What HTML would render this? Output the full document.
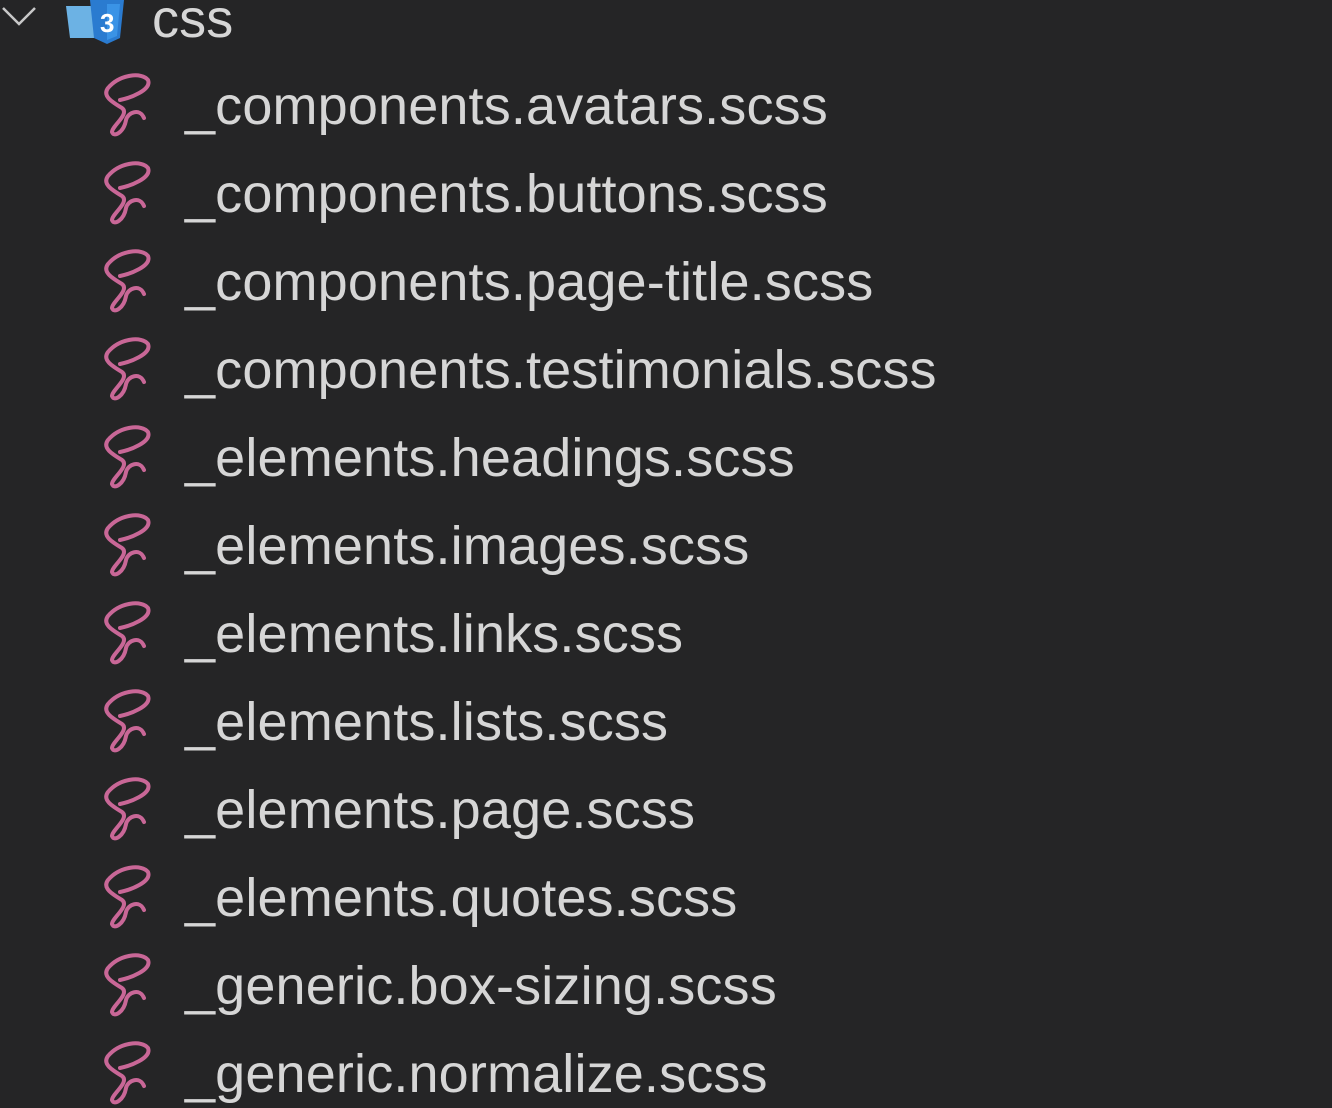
<!DOCTYPE html>
<html><head><meta charset="utf-8"><style>
html,body{margin:0;padding:0;background:#252526;width:1332px;height:1084px;overflow:hidden;}
.t{position:absolute;left:185px;font-family:"Liberation Sans",Arial,sans-serif;font-size:54px;letter-spacing:0.15px;color:#d6d6d6;line-height:1;white-space:nowrap;}
svg.s{position:absolute;left:90px;width:80px;height:70px;}
</style></head><body>
<svg style="position:absolute;left:0;top:0" width="40" height="40"><path d="M3 8 L19 24 L35 8" stroke="#c8c8c8" stroke-width="2.5" fill="none"/></svg>
<svg style="position:absolute;left:62px;top:0" width="66" height="46">
<path d="M4 6 L36 6 L34 38 L8 38 Z" fill="#6cb2e4"/>
<path d="M28 0 L62 0 L58 38 L45 44 L32 38 Z" fill="#2a7bd0"/>
<path d="M45 4 L58 4 L55 36 L45 40 Z" fill="#3a93e6"/>
<text x="38" y="32" font-family="Liberation Sans,sans-serif" font-size="26" font-weight="bold" fill="#fff">3</text>
</svg>
<div class="t" style="left:152px;top:-8px">css</div>
<div id="c"></div>
<script>
var names=["_components.avatars.scss","_components.buttons.scss","_components.page-title.scss","_components.testimonials.scss","_elements.headings.scss","_elements.images.scss","_elements.links.scss","_elements.lists.scss","_elements.page.scss","_elements.quotes.scss","_generic.box-sizing.scss","_generic.normalize.scss"];
var h="";
names.forEach(function(n,i){var y=105+88*i;
h+='<svg class="s" style="top:'+(y-35)+'px" viewBox="0 0 80 70"><path d="M30 30 C40 28,62 20,58 10 C52 2,30 4,18 18 C12 26,22 32,32 38 C40 44,22 56,22 62 C24 68,34 62,36 50 C38 42,50 38,54 48" stroke="#c96797" stroke-width="4" fill="none" stroke-linecap="round"/></svg>';
h+='<div class="t" style="top:'+(y-26)+'px">'+n+'</div>';});
document.getElementById("c").innerHTML=h;
</script>
</body></html>
